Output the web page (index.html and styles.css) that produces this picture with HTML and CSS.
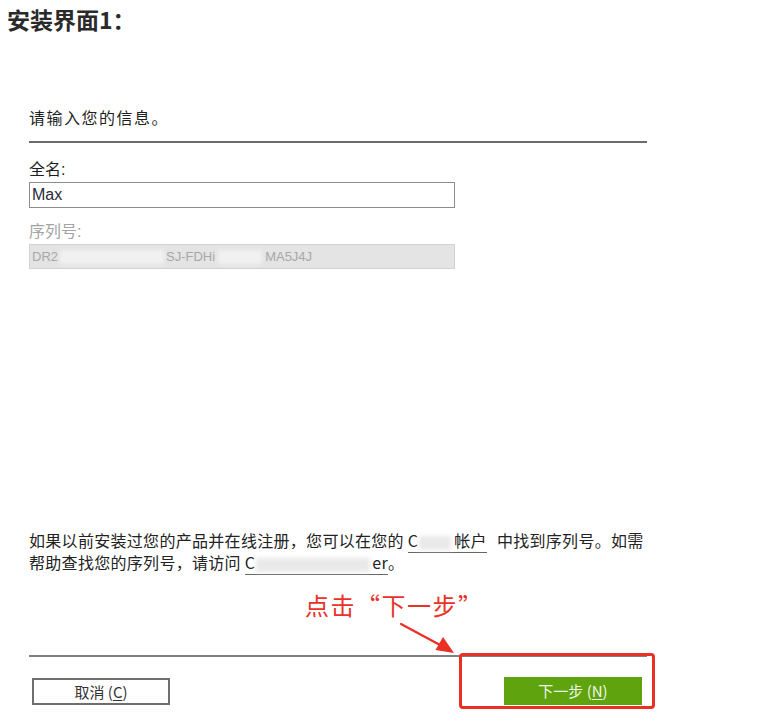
FILE: index.html
```html
<!DOCTYPE html>
<html lang="zh-CN">
<head>
<meta charset="utf-8">
<title>安装界面1</title>
<link rel="stylesheet" href="styles.css">
</head>
<body>
<h1 class="title">安装界面1：</h1>
<div class="panel">
  <div class="heading">请输入您的信息。</div>
  <div class="rule"></div>
  <div class="label">全名:</div>
  <div class="field">Max</div>
  <div class="label label-disabled">序列号:</div>
  <div class="field field-disabled">DR2<span class="blur blur-a"></span>SJ-FDHi<span class="blur blur-b"></span>MA5J4J</div>
  <p class="info">如果以前安装过您的产品并在线注册，您可以在您的 <span class="link">C<span class="blur blur-c"></span>帐户</span><span class="gap"></span>中找到序列号。如需<br>帮助查找您的序列号，请访问 <span class="link">C<span class="blur blur-d"></span>er</span>。</p>
  <div class="note">点击“下一步”</div>
  <div class="footer">
    <div class="rule"></div>
    <div class="buttons">
      <div class="btn btn-cancel">取消 (<u>C</u>)</div>
      <div class="btn btn-next">下一步 (<u>N</u>)</div>
    </div>
    <svg class="arrow" width="70" height="45" viewBox="0 0 70 45">
      <path d="M6 6 L46 27.5" stroke="#ea2f25" stroke-width="2.2" stroke-linecap="round" fill="none"/>
      <polygon points="40.5,32 48,19 59,35" fill="#ea2f25"/>
    </svg>
    <div class="highlight"></div>
  </div>
</div>
</body>
</html>
```

FILE: styles.css
```css
html, body {
  margin: 0;
  padding: 0;
  background: #ffffff;
}

body {
  font-family: "Liberation Sans", "Noto Sans CJK SC", sans-serif;
  color: #222222;
  width: 761px;
  height: 717px;
  overflow: hidden;
}

.title {
  margin: 0;
  padding: 4px 0 0 7px;
  height: 30px;
  line-height: 30px;
  font-size: 23px;
  font-weight: 700;
  color: #2a2a2a;
  font-family: "Noto Sans CJK SC", "Liberation Sans", sans-serif;
}

.panel {
  margin-left: 29px;
  width: 618px;
}

.heading {
  margin-top: 71px;
  line-height: 24px;
  font-size: 16px;
  letter-spacing: 1.5px;
  font-family: "Noto Sans CJK SC", sans-serif;
  color: #1f1f1f;
}

.rule {
  height: 2px;
  background: #6b6b6b;
  margin-top: 12px;
}

.label {
  margin-top: 16px;
  line-height: 22px;
  font-size: 16px;
  color: #1f1f1f;
}

.label-disabled {
  margin-top: 13px;
  color: #a3a3a3;
}

.field {
  box-sizing: border-box;
  margin-top: 1px;
  width: 426px;
  height: 26px;
  border: 1px solid #8c8c8c;
  padding: 0 0 0 2px;
  line-height: 24px;
  font-size: 16px;
  color: #2a2a3a;
  background: #ffffff;
}

.field-disabled {
  height: 25px;
  border-color: #d2d2d2;
  background: #e4e4e4;
  color: #a8a8a8;
  font-size: 13px;
  line-height: 23px;
  display: flex;
  align-items: center;
}

.blur {
  display: inline-block;
  height: 14px;
  background: #f1f1f1;
  filter: blur(2px);
  vertical-align: middle;
}

.blur-a { width: 104px; margin: 0 2px; }
.blur-b { width: 44px; margin: 0 3px; }
.blur-c { width: 32px; margin: 0 3px 0 1px; background: #e9e9e9; }
.blur-d { width: 114px; margin: 0 2px 0 1px; background: #e9e9e9; }

.info {
  margin: 260px 0 0 0;
  line-height: 22px;
  font-size: 16px;
  letter-spacing: 0.3px;
  color: #222222;
  white-space: nowrap;
  font-family: "Noto Sans CJK SC", sans-serif;
}

.link {
  border-bottom: 1px solid #666666;
}

.gap {
  display: inline-block;
  width: 10px;
}

.note {
  margin: 17px 0 0 276px;
  line-height: 30px;
  height: 30px;
  font-size: 24px;
  letter-spacing: 1.5px;
  color: #e8322a;
  font-family: "Noto Sans CJK SC", sans-serif;
}

.footer {
  position: relative;
  margin-top: 35px;
}

.footer .rule {
  margin-top: 0;
  background: #808080;
}

.buttons {
  display: flex;
  align-items: flex-start;
  margin-top: 21px;
}

.btn {
  box-sizing: border-box;
  width: 138px;
  text-align: center;
  font-size: 15px;
  font-family: "Noto Sans CJK SC", sans-serif;
}

.btn u {
  text-underline-offset: 2px;
}

.btn-cancel {
  margin-left: 3px;
  height: 27px;
  line-height: 23px;
  border: 2px solid #6e6e6e;
  color: #333333;
  background: #ffffff;
}

.btn-next {
  margin-left: auto;
  margin-right: 5px;
  margin-top: -1px;
  height: 28px;
  line-height: 28px;
  background: #5fa30f;
  color: #eef6e4;
}

.arrow {
  position: absolute;
  left: 366px;
  top: -37px;
}

.highlight {
  position: absolute;
  left: 430px;
  top: -2px;
  width: 196px;
  height: 56px;
  box-sizing: border-box;
  border: 3px solid #ea2f25;
  border-radius: 4px;
}
```
